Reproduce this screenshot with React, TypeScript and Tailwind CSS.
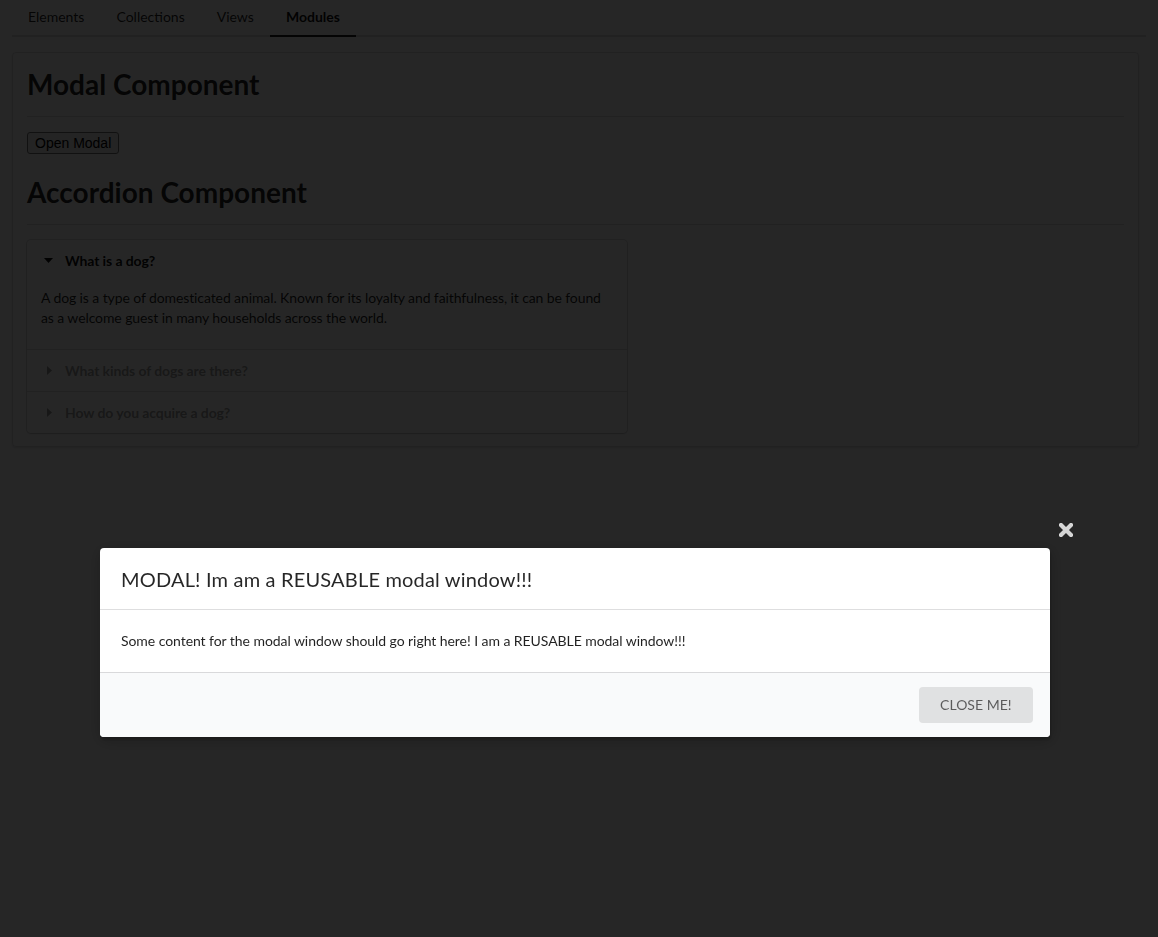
import React from "react";

function Caret({ open }: { open: boolean }) {
  return (
    <span className="inline-flex w-[24px] items-center">
      {open ? (
        <svg width="9" height="5" viewBox="0 0 9 5" className="ml-[3px]">
          <path d="M0 0 L9 0 L4.5 5 Z" fill="rgba(0,0,0,0.95)" />
        </svg>
      ) : (
        <svg width="5" height="9" viewBox="0 0 5 9" className="ml-[6px]">
          <path d="M0 0 L5 4.5 L0 9 Z" fill="rgba(0,0,0,0.4)" />
        </svg>
      )}
    </span>
  );
}

export default function App() {
  const tabs = ["Elements", "Collections", "Views", "Modules"];
  return (
    <div className="relative min-h-[937px] bg-white font-['Lato',sans-serif] text-[14px] text-[rgba(0,0,0,0.87)]">
      <div className="px-[12px]">
        <div className="flex border-b-2 border-[rgba(34,36,38,0.15)]">
          {tabs.map((t) => (
            <div
              key={t}
              className={
                t === "Modules"
                  ? "mb-[-2px] border-b-2 border-[#1b1c1d] px-[16px] pt-[10px] pb-[11px] leading-[14px] font-bold text-[rgba(0,0,0,0.95)]"
                  : "mb-[-2px] border-b-2 border-transparent px-[16px] pt-[10px] pb-[11px] leading-[14px] text-[rgba(0,0,0,0.87)]"
              }
            >
              {t}
            </div>
          ))}
        </div>
      </div>

      <div className="ml-[12px] mr-[19px] mt-[15px] rounded-[4px] border border-[rgba(34,36,38,0.15)] px-[14px] pt-[13px] pb-[13px] shadow-[0_1px_2px_0_rgba(34,36,38,0.15)]">
        <h1 className="border-b border-[rgba(34,36,38,0.15)] pb-[14px] text-[28px] font-bold leading-[36px] text-[rgba(0,0,0,0.87)]">
          Modal Component
        </h1>
        <button className="mt-[15px] rounded-[3px] border border-[#767676] bg-[#efefef] px-[7px] py-[2px] font-['Liberation_Sans',Arial,sans-serif] text-[14px] leading-[16px] text-black">
          Open Modal
        </button>
        <h1 className="mt-[20px] border-b border-[rgba(34,36,38,0.15)] pb-[14px] text-[28px] font-bold leading-[36px] text-[rgba(0,0,0,0.87)]">
          Accordion Component
        </h1>
        <div className="mt-[15px] w-[600px] rounded-[4px] bg-white shadow-[0_1px_2px_0_rgba(34,36,38,0.15),0_0_0_1px_rgba(34,36,38,0.15)]">
          <div className="flex items-center px-[14px] py-[10.5px] font-bold leading-[20px] tracking-[-0.1px] text-[rgba(0,0,0,0.95)]">
            <Caret open />
            What is a dog?
          </div>
          <div className="px-[14px] pt-[7px] pb-[21px] leading-[20px] tracking-[-0.1px] text-[rgba(0,0,0,0.87)]">
            A dog is a type of domesticated animal. Known for its loyalty and faithfulness, it can be found as a welcome guest in many households across the world.
          </div>
          <div className="flex items-center border-t border-[rgba(34,36,38,0.15)] px-[14px] py-[10.5px] font-bold leading-[20px] tracking-[-0.1px] text-[rgba(0,0,0,0.4)]">
            <Caret open={false} />
            What kinds of dogs are there?
          </div>
          <div className="flex items-center border-t border-[rgba(34,36,38,0.15)] px-[14px] py-[10.5px] font-bold leading-[20px] tracking-[-0.1px] text-[rgba(0,0,0,0.4)]">
            <Caret open={false} />
            How do you acquire a dog?
          </div>
        </div>
      </div>

      <div className="fixed inset-0 bg-black/85">
        <div className="relative ml-[100px] mt-[548px] w-[950px] rounded-[4px] bg-white shadow-[1px_3px_3px_0_rgba(0,0,0,0.2),1px_3px_15px_2px_rgba(0,0,0,0.2)]">
          <div className="absolute left-[calc(100%+9px)] top-[-25px]">
            <svg width="14" height="14" viewBox="0 0 14 14">
              <path d="M2 2 L12 12 M12 2 L2 12" stroke="#d6d6d6" strokeWidth="4.2" strokeLinecap="square" />
            </svg>
          </div>
          <div className="rounded-t-[4px] border-b border-[rgba(34,36,38,0.15)] px-[21px] py-[17.5px] text-[20px] leading-[26px] tracking-[0.18px] text-[rgba(0,0,0,0.85)]">
            MODAL! Im am a REUSABLE modal window!!!
          </div>
          <div className="p-[21px] leading-[20px] tracking-[-0.06px] text-[rgba(0,0,0,0.87)]">
            Some content for the modal window should go right here! I am a REUSABLE modal window!!!
          </div>
          <div className="flex justify-end rounded-b-[4px] border-t border-[rgba(34,36,38,0.15)] bg-[#f9fafb] p-[14px]">
            <button className="mr-[3.5px] rounded-[4px] bg-[#e0e1e2] px-[21px] py-[11px] text-[14px] leading-[14px] text-[rgba(0,0,0,0.6)]">
              CLOSE ME!
            </button>
          </div>
        </div>
      </div>
    </div>
  );
}
